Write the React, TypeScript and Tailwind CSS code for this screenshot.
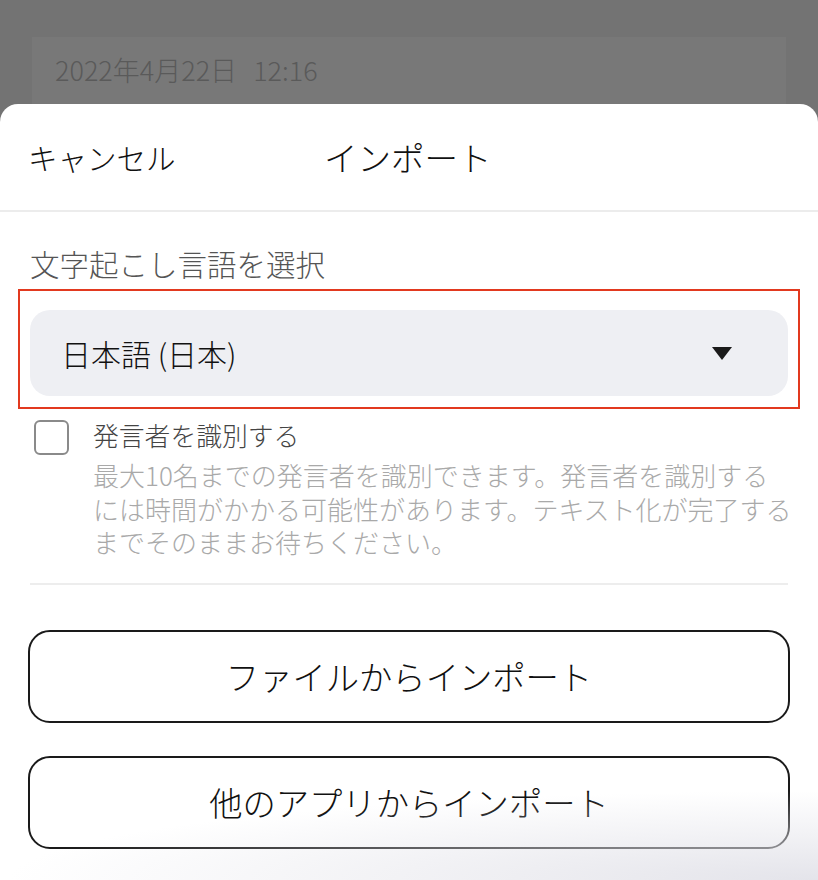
import React from "react";

export default function App() {
  return (
    <div
      className="relative w-[818px] h-[880px] overflow-hidden bg-[#737373] flex flex-col"
      style={{ fontFamily: '"Noto Sans CJK JP", "Noto Sans", sans-serif' }}
    >
      <div className="pt-[37px] px-[32px] shrink-0">
        <div className="h-[67px] bg-[#787878] flex items-center pl-[23px] text-[27px] text-[#5a5a5a] font-light">
          <span>2022年4月22日</span>
          <span className="ml-[16px]">12:16</span>
        </div>
      </div>

      <div className="flex-1 bg-white rounded-t-[18px] flex flex-col">
        <div className="h-[108px] border-b-2 border-[#ececec] flex items-center relative shrink-0">
          <span className="pl-[28px] text-[29.5px] text-[#111] font-light">キャンセル</span>
          <span className="absolute left-[324px] text-[33.5px] text-[#111] font-light">インポート</span>
        </div>

        <div className="pt-[31px] pl-[30px] text-[29.5px] leading-[40px] text-[#555] font-light">
          文字起こし言語を選択
        </div>

        <div className="mt-[6px] mx-[18px] border-2 border-[#e2391f] pt-[19px] pb-[11px] px-[10px]">
          <div className="h-[86px] bg-[#eeeff3] rounded-[20px] flex items-center justify-between pl-[31px] pr-[56px]">
            <span className="text-[30px] text-[#111] font-light">日本語 (日本)</span>
            <svg width="20" height="13" viewBox="0 0 20 13">
              <polygon points="0,0 20,0 10,13" fill="#1a1a1a" />
            </svg>
          </div>
        </div>

        <div className="flex mt-[11px] pl-[34px] pr-[20px]">
          <div className="w-[35px] h-[35px] border-2 border-[#8a8a8a] rounded-[6px] shrink-0" />
          <div className="ml-[24px] flex flex-col">
            <span className="text-[25.8px] leading-[34px] text-[#444] font-light -mt-[2px]">発言者を識別する</span>
            <p className="mt-[6px] text-[26px] leading-[33.5px] text-[#a9a9a9] font-light whitespace-nowrap">
              最大10名までの発言者を識別できます。発言者を識別する
              <br />
              には時間がかかる可能性があります。テキスト化が完了する
              <br />
              までそのままお待ちください。
            </p>
          </div>
        </div>

        <div className="mt-[24px] mx-[30px] h-[2px] bg-[#ededed]" />

        <div className="mt-[45px] mx-[28px] flex flex-col gap-[33px]">
          <button className="h-[93px] w-[762px] border-2 border-[#1a1a1a] rounded-[22px] bg-white flex items-center justify-center text-[33.3px] text-[#111] font-light">
            ファイルからインポート
          </button>
          <button className="h-[93px] w-[762px] border-2 border-[#1a1a1a] rounded-[22px] bg-white flex items-center justify-center text-[33.3px] text-[#111] font-light">
            他のアプリからインポート
          </button>
        </div>
      </div>

      <div className="pointer-events-none absolute left-0 right-0 bottom-0 h-[90px] bg-[radial-gradient(ellipse_at_100%_100%,rgba(225,225,232,0.9),rgba(255,255,255,0)_70%)]" />
    </div>
  );
}
